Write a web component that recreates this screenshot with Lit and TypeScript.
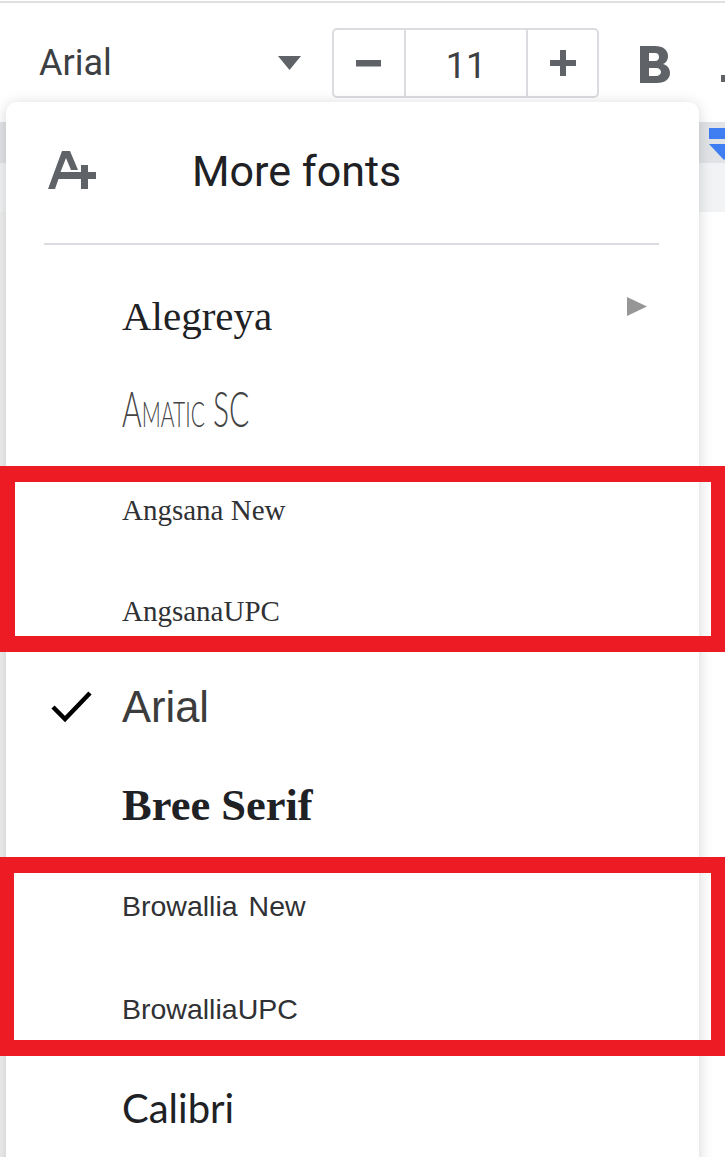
import { LitElement, html, css } from "lit";
import { customElement } from "lit/decorators.js";

@customElement("app-root")
export class AppRoot extends LitElement {
  static styles = css`
    :host { display: block; position: relative; width: 725px; height: 1157px; overflow: hidden; background: #fff; font-family: Roboto, "Liberation Sans", sans-serif; color: #202124; }
    .topline { height: 2px; margin-top: 1px; background: #e0e0e0; }
    .toolbar { height: 119px; box-sizing: border-box; padding: 25px 0 0 39px; display: flex; align-items: flex-start; }
    .font-name { width: 264px; height: 70px; display: flex; align-items: center; justify-content: space-between; font-size: 36px; color: #3c4043; }
    .font-name span { position: relative; top: 0; }
    .font-name svg { width: 23px; height: 14px; }
    .stepper { margin-left: 31px; width: 267px; height: 70px; box-sizing: border-box; border: 2px solid #dadce0; border-radius: 5px; display: flex; }
    .step { width: 70px; display: flex; align-items: center; justify-content: center; }
    .step.end { width: 69px; }
    .step svg { width: 26px; height: 26px; }
    .size { width: 124px; box-sizing: border-box; padding-top: 6px; border-left: 2px solid #dadce0; border-right: 2px solid #dadce0; display: flex; align-items: center; justify-content: center; font-size: 36px; color: #3c4043; }
    .bold { margin-left: 41px; margin-top: 18px; width: 30px; height: 37px; flex: none; }
    .stub { margin-left: 51px; margin-top: 47px; width: 4px; height: 7px; background: #5f6368; flex: none; }
    .band { height: 41px; background: #e1e3e6; position: relative; }
    .band2 { height: 49px; background: #f1f3f4; }
    .page { position: absolute; left: 0; top: 212px; bottom: 0; width: 6px; background: #efefef; }
    .marker { position: absolute; left: 709px; top: 6px; width: 30px; height: 32px; }
    .menu { position: absolute; left: 6px; top: 102px; width: 693px; height: 1080px; background: #fff; border-radius: 11px; box-shadow: 0 2px 14px rgba(60,64,67,.22); }
    .more { height: 138px; display: flex; align-items: center; padding-left: 42px; }
    .more svg { width: 49px; height: 40px; flex: none; }
    .more span { margin-left: 95px; font-size: 43px; color: #202124; }
    .sep { height: 2px; margin: 3px 40px 25px 38px; background: #dadce0; }
    .row { position: relative; display: flex; align-items: center; padding-left: 116px; white-space: nowrap; }
    .txt { display: inline-block; transform-origin: left center; }
    .r-alegreya { height: 92px; }
    .r-alegreya .txt { font: 41px "Liberation Serif", serif; color: #202124; }
    .r-amatic { height: 92px; }
    .r-amatic .txt { font: 300 50px Lato, sans-serif; font-variant: small-caps; transform: scaleX(.6); color: #444; }
    .r-ang1 { height: 112px; }
    .r-ang2 { height: 90px; }
    .r-ang1 .txt, .r-ang2 .txt { font: 29px "Liberation Serif", serif; color: #303134; }
    .r-arial { height: 102px; }
    .r-arial .txt { font: 43.500px "Liberation Sans", sans-serif; color: #3c3c3c; }
    .r-bree { height: 94px; }
    .r-bree .txt { font: bold 44.500px "Liberation Serif", serif; color: #202124; }
    .r-bro1 { height: 108px; }
    .r-bro2 { height: 98px; }
    .r-bro1 .txt, .r-bro2 .txt { font: 28.500px "Liberation Sans", sans-serif; color: #303134; }
    .r-bro1 .txt { word-spacing: 3px; }
    .r-calibri { height: 100px; }
    .r-calibri .txt { font: 40px Lato, sans-serif; color: #202124; }
    .arrow { position: absolute; left: 621px; top: 27px; width: 20px; height: 19px; }
    .check { position: absolute; left: 45px; top: 35px; width: 42px; height: 32px; }
    .callout { position: absolute; box-sizing: border-box; border: 16px solid #ed1c24; }
    .c1 { left: -1px; top: 466px; width: 728px; height: 186px; }
    .c2 { left: -2px; top: 857px; width: 729px; height: 199px; }
  `;

  render() {
    return html`
      <div class="topline"></div>
      <div class="toolbar">
        <div class="font-name">
          <span>Arial</span>
          <svg viewBox="0 0 23 14"><path d="M0 0h23L11.5 14z" fill="#5f6368"/></svg>
        </div>
        <div class="stepper">
          <div class="step"><svg viewBox="0 0 26 26"><rect y="10" width="25" height="6.5" fill="#5f6368"/></svg></div>
          <div class="size">11</div>
          <div class="step end"><svg viewBox="0 0 26 26"><path d="M0 10h26v6H0zM10 0h6v26h-6z" fill="#5f6368"/></svg></div>
        </div>
        <svg class="bold" viewBox="0 0 30 37"><path fill-rule="evenodd" fill="#5f6368" d="M0 0h15c8 0 13 4 13 10 0 4-2 7-5 8 4 1 7 4 7 9 0 6-5 10-13 10H0zM9 7v8h6c3 0 4-2 4-4s-1-4-4-4zM9 22v8h7c3 0 5-2 5-4s-2-4-5-4z"/></svg>
        <div class="stub"></div>
      </div>
      <div class="band">
        <svg class="marker" viewBox="0 0 30 32"><path d="M0 0h30v11H0z M0 16h30L15 32z" fill="#3f7df3"/></svg>
      </div>
      <div class="band2"></div>
      <div class="page"></div>

      <div class="menu">
        <div class="more">
          <svg viewBox="0 0 49 40">
            <path d="M0 38 14 0h8l8 19h-7L18 7 12.500 21H33v-7h7v7h8v7h-8v10h-7V28H10.500L7 38z" fill="#5f6368"/>
          </svg>
          <span>More fonts</span>
        </div>
        <div class="sep"></div>
        <div class="row r-alegreya">
          <span class="txt">Alegreya</span>
          <svg class="arrow" viewBox="0 0 20 19"><path d="M0 0l20 9.500L0 19z" fill="#969696"/></svg>
        </div>
        <div class="row r-amatic"><span class="txt">Amatic SC</span></div>
        <div class="row r-ang1"><span class="txt">Angsana New</span></div>
        <div class="row r-ang2"><span class="txt">AngsanaUPC</span></div>
        <div class="row r-arial">
          <svg class="check" viewBox="0 0 42 32"><path d="M2 16l12 12L39 2" fill="none" stroke="#000" stroke-width="4.500"/></svg>
          <span class="txt">Arial</span>
        </div>
        <div class="row r-bree"><span class="txt">Bree Serif</span></div>
        <div class="row r-bro1"><span class="txt">Browallia New</span></div>
        <div class="row r-bro2"><span class="txt">BrowalliaUPC</span></div>
        <div class="row r-calibri"><span class="txt">Calibri</span></div>
      </div>

      <div class="callout c1"></div>
      <div class="callout c2"></div>
    `;
  }
}
